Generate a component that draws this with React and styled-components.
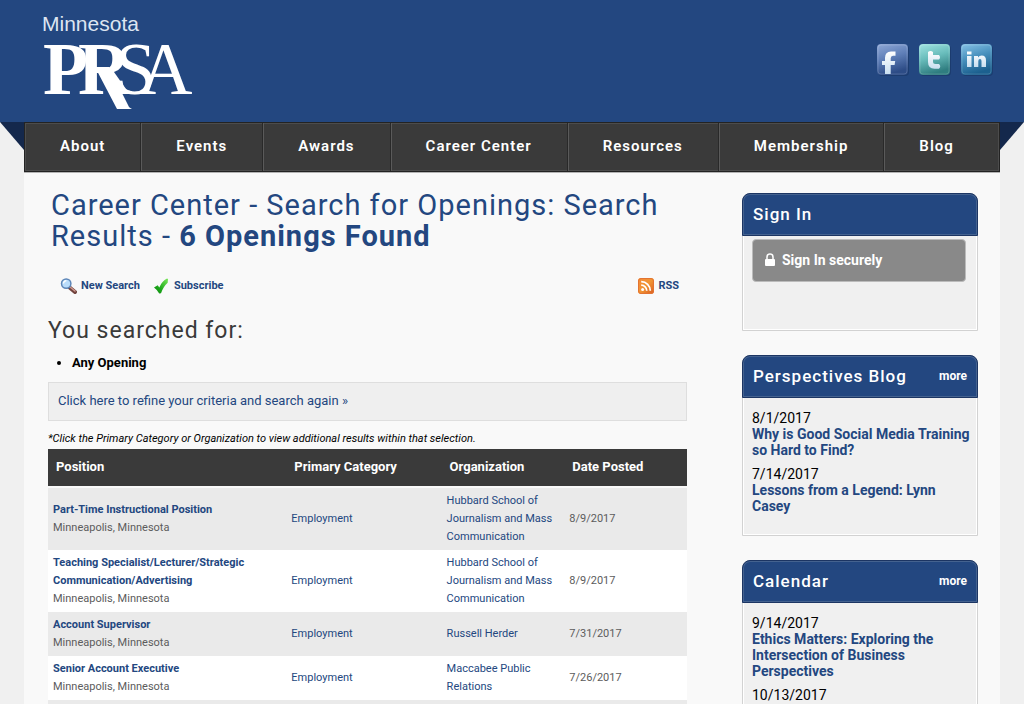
import React from "react";
import styled, { createGlobalStyle } from "styled-components";

const blue = "#234780";

const GlobalStyle = createGlobalStyle`
  * { box-sizing: border-box; }
  body {
    margin: 0;
    background: #f0f0f0;
    color: #000;
    font-family: Roboto, "Liberation Sans", sans-serif;
    font-size: 13px;
  }
  a { color: ${blue}; text-decoration: none; }
  h1, h2, p, ul { margin: 0; padding: 0; }
`;

const Header = styled.header`
  display: flex;
  justify-content: space-between;
  align-items: flex-start;
  height: 122px;
  padding: 12px 31px 0 42px;
  background: ${blue};
`;

const LogoLink = styled.a`
  display: block;
  svg { display: block; }
`;

const Social = styled.div`
  display: flex;
  gap: 10px;
  padding-top: 32px;
  svg { display: block; }
`;

const NavRow = styled.div`
  display: flex;
  align-items: flex-start;
`;

const Fold = styled.div`
  flex: none;
  width: 24px;
  height: 28px;
  background: #14284c;
  clip-path: ${(p) => (p.$right ? "polygon(0 0, 100% 0, 0 100%)" : "polygon(0 0, 100% 0, 100% 100%)")};
`;

const Nav = styled.nav`
  flex: 1;
  display: flex;
  height: 50px;
  border: 1px solid #232323;
  background: #3a3a3a;
  box-shadow: inset 0 1px #4c4c4c, inset 0 -1px #4c4c4c, 0 1px #b4b4b4;
`;

const NavLink = styled.a`
  display: flex;
  align-items: center;
  padding: 0 35px 2px 34px;
  border-left: 1px solid #5a5a5a;
  border-right: 1px solid #292929;
  color: #fff;
  font-size: 15px;
  font-weight: 600;
  letter-spacing: 1px;
  white-space: nowrap;
  &:first-child { border-left-color: #4c4c4c; }
  &:last-child {
    flex: 1;
    border-right-color: #4c4c4c;
  }
`;

const Content = styled.div`
  display: grid;
  grid-template-columns: minmax(0, 1fr) 236px;
  column-gap: 55px;
  margin: 0 24px;
  padding: 0 22px 0 24px;
  background: #f9f9f9;
`;

const Main = styled.main`
  padding-top: 18px;
`;

const Title = styled.h1`
  padding: 0 3px;
  color: ${blue};
  font-size: 29px;
  line-height: 31px;
  font-weight: 400;
  letter-spacing: 1px;
`;

const Toolbar = styled.div`
  display: flex;
  gap: 14px;
  margin-top: 26px;
  padding: 0 8px 0 12px;
`;

const Tool = styled.a`
  display: flex;
  align-items: center;
  gap: 4px;
  margin-left: ${(p) => (p.$end ? "auto" : "0")};
  font-size: 11px;
  line-height: 16px;
  font-weight: 700;
`;

const Subtitle = styled.h2`
  margin-top: 23px;
  color: #3a3a3a;
  font-size: 23px;
  line-height: 28px;
  font-weight: 400;
  letter-spacing: 1px;
`;

const Criteria = styled.ul`
  margin-top: 9px;
  padding-left: 24px;
  font-weight: 700;
  line-height: 18px;
`;

const Refine = styled.a`
  display: block;
  margin-top: 10px;
  padding: 0 9px 2px;
  border: 1px solid #dedede;
  background: #efefef;
  font-size: 13px;
  line-height: 35px;
`;

const Note = styled.p`
  margin-top: 10px;
  font-size: 11px;
  line-height: 16px;
  font-style: italic;
`;

const Table = styled.table`
  width: 100%;
  margin-top: 2px;
  border-collapse: collapse;
  table-layout: fixed;
  font-size: 11px;
  line-height: 18px;
`;

const Col = styled.col`
  width: ${(p) => p.$width};
`;

const HeadCell = styled.th`
  height: 38px;
  padding: 0 8px 2px;
  border-bottom: 2px solid #f9f9f9;
  background: #3a3a3a;
  color: #fff;
  font-size: 13px;
  font-weight: 700;
  text-align: left;
`;

const Row = styled.tr`
  background: #fff;
  &:nth-child(odd) { background: #eaeaea; }
`;

const Cell = styled.td`
  height: 44px;
  padding: 4px 5px;
  color: #5c5c5c;
`;

const JobLink = styled.a`
  display: block;
  font-weight: 700;
`;

const Sidebar = styled.aside`
  display: flex;
  flex-direction: column;
  gap: 24px;
  padding: 21px 0 24px;
`;

const Panel = styled.section`
  min-height: ${(p) => p.$height};
  border: 1px solid #d2d2d2;
  border-radius: 8px 8px 0 0;
  background: #f0f0f0;
  box-shadow: inset 0 0 0 1px #fff;
`;

const PanelHead = styled.div`
  display: flex;
  align-items: center;
  justify-content: space-between;
  height: 43px;
  margin: -1px -1px 0;
  padding: 0 10px 2px;
  border: 1px solid #1c3563;
  border-radius: 8px 8px 0 0;
  background: ${blue};
  box-shadow: inset 0 0 0 1px #44628f;
`;

const PanelTitle = styled.h2`
  color: #fff;
  font-size: 17px;
  font-weight: 500;
  letter-spacing: 1px;
`;

const More = styled.a`
  color: #fff;
  font-size: 12px;
  font-weight: 700;
`;

const SignIn = styled.button`
  display: flex;
  align-items: center;
  gap: 7px;
  width: calc(100% - 20px);
  height: 43px;
  margin: 3px 11px 0 9px;
  padding: 0 12px 2px;
  border: 1px solid #bbb;
  border-radius: 4px;
  background: #898989;
  color: #fff;
  font-family: inherit;
  font-size: 14px;
  font-weight: 700;
`;

const Items = styled.div`
  display: flex;
  flex-direction: column;
  gap: 8px;
  padding: 12px 5px 12px 9px;
  font-size: 14px;
  line-height: 16px;
  a { display: block; font-weight: 700; }
`;

function Logo() {
  return (
    <svg width="152" height="104" viewBox="42 12 152 104" role="img" aria-label="Minnesota PRSA">
      <text x="42" y="31" fontFamily="Liberation Sans" fontSize="21" fill="#dde5f1">Minnesota</text>
      <text y="94" fill="#fff" fontFamily="Liberation Serif" fontSize="74">
        <tspan x="43" fontWeight="700">P</tspan>
        <tspan x="78" fontWeight="700">R</tspan>
        <tspan x="115">S</tspan>
        <tspan x="139">A</tspan>
      </text>
      <path d="M95 67h14l20 40q1 1 3 2h-15z" fill="#fff" />
    </svg>
  );
}

function Badge({ id, top, mid, bottom, label, children }) {
  return (
    <a href="#social" aria-label={label}>
      <svg width="32" height="33" viewBox="0 0 32 33">
        <defs>
          <linearGradient id={id} x1="0" y1="0" x2=".3" y2="1">
            <stop offset="0" stopColor={top} />
            <stop offset=".5" stopColor={mid} />
            <stop offset="1" stopColor={bottom} />
          </linearGradient>
          <linearGradient id={id + "g"} x1="0" y1="0" x2="0" y2="1">
            <stop offset="0" stopColor="#fff" />
            <stop offset="1" stopColor="#c9dff0" />
          </linearGradient>
        </defs>
        <rect x="1" y="1" width="31" height="31" rx="4" fill="#152f5c" opacity=".45" />
        <rect x="0" y="0" width="31" height="31" rx="4" fill={`url(#${id})`} />
        <rect x="1" y="1" width="29" height="29" rx="3" fill="none" stroke="#fff" opacity=".15" />
        <g fill={`url(#${id}g)`}>{children}</g>
      </svg>
    </a>
  );
}

function SearchIcon() {
  return (
    <svg width="17" height="16" viewBox="0 0 17 16">
      <path d="M9 9l6 5" stroke="#71433e" strokeWidth="4" strokeLinecap="round" />
      <path d="M10 9l5 4" stroke="#cf9a90" strokeWidth="1.5" strokeLinecap="round" />
      <circle cx="6.2" cy="5.6" r="4.7" fill="#b9dcfa" stroke="#5d86b8" strokeWidth="1.5" />
      <path d="M3.4 5.5q.4-2.6 3-2.8" stroke="#fff" strokeWidth="1.3" fill="none" />
    </svg>
  );
}

function CheckIcon() {
  return (
    <svg width="16" height="16" viewBox="0 0 16 16">
      <defs>
        <linearGradient id="check" x1="1" y1="0" x2="0" y2="1">
          <stop offset="0" stopColor="#7be85a" />
          <stop offset=".6" stopColor="#1faa1c" />
          <stop offset="1" stopColor="#0a840e" />
        </linearGradient>
      </defs>
      <path d="M0 9.500L3.700 7.300l1.600 2.200Q8 3 13 .6l1 .3-.3 3.800Q9.300 8.500 7 15.300L5.200 15.500Q3.300 11.800 0 9.500z" fill="url(#check)" />
    </svg>
  );
}

function RssIcon() {
  return (
    <svg width="16" height="16" viewBox="0 0 16 16">
      <defs>
        <linearGradient id="rss" x1="0" y1="0" x2="1" y2="1">
          <stop offset="0" stopColor="#f58a38" />
          <stop offset=".5" stopColor="#f19535" />
          <stop offset="1" stopColor="#d95a20" />
        </linearGradient>
      </defs>
      <rect width="16" height="16" rx="3" fill="url(#rss)" />
      <rect x=".5" y=".5" width="15" height="15" rx="2.500" fill="none" stroke="#e37431" />
      <circle cx="4.600" cy="11.500" r="1.500" fill="#fff" />
      <path d="M3.200 7.200a5.600 5.600 0 0 1 5.600 5.600M3.200 3.700a9.100 9.100 0 0 1 9.100 9.100" fill="none" stroke="#fff" strokeWidth="1.700" />
    </svg>
  );
}

function LockIcon() {
  return (
    <svg width="10" height="14" viewBox="0 0 10 14">
      <path d="M2 6V4a3 3 0 0 1 6 0v2" fill="none" stroke="#fff" strokeWidth="1.500" />
      <rect x="0" y="6" width="10" height="7" rx="1" fill="#fff" />
    </svg>
  );
}

const menu = ["About", "Events", "Awards", "Career Center", "Resources", "Membership", "Blog"];

const jobs = [
  ["Part-Time Instructional Position", "Hubbard School of Journalism and Mass Communication", "8/9/2017"],
  ["Teaching Specialist/Lecturer/Strategic Communication/Advertising", "Hubbard School of Journalism and Mass Communication", "8/9/2017"],
  ["Account Supervisor", "Russell Herder", "7/31/2017"],
  ["Senior Account Executive", "Maccabee Public Relations", "7/26/2017"],
];

const posts = [
  ["8/1/2017", "Why is Good Social Media Training so Hard to Find?"],
  ["7/14/2017", "Lessons from a Legend: Lynn Casey"],
];

const events = [
  ["9/14/2017", "Ethics Matters: Exploring the Intersection of Business Perspectives"],
  ["10/13/2017", ""],
];

function ItemList({ items }) {
  return (
    <Items>
      {items.map(([date, title]) => (
        <div key={date}>
          {date}
          {title && <a href="#item">{title}</a>}
        </div>
      ))}
    </Items>
  );
}

export default function App() {
  return (
    <>
      <GlobalStyle />
      <Header>
        <LogoLink href="#home"><Logo /></LogoLink>
        <Social>
          <Badge id="fb" label="Facebook" top="#8fa8d6" mid="#5f7fb8" bottom="#2d4c86">
            <path d="M8 30V21H5v-4h3v-3q0-6.500 6-6.500h4.500v4.300H16q-2.300 0-2.300 2.500V17h4.500l-.6 4h-3.900v9z" />
          </Badge>
          <Badge id="tw" label="Twitter" top="#a0e4e2" mid="#68bcbb" bottom="#2f7d80">
            <path d="M9 8q2.500-2 5 0v3h6q2 2.300 0 4.500h-6v2q0 2.500 2.500 2.500H20q2.500 2.300 0 4.700h-4.500Q9 24.700 9 18z" />
          </Badge>
          <Badge id="li" label="LinkedIn" top="#86c2e6" mid="#4790bd" bottom="#1c608f">
            <path d="M6 12h4.500v11H6zM6 7.500h4.500v3H6zM13 12h4v1.500q1.300-1.900 3.700-1.900 4.300 0 4.300 5V23h-4.500v-6q0-2-1.500-2-1.700 0-1.700 2v6H13z" />
          </Badge>
        </Social>
      </Header>
      <NavRow>
        <Fold />
        <Nav>
          {menu.map((name) => <NavLink key={name} href="#menu">{name}</NavLink>)}
        </Nav>
        <Fold $right />
      </NavRow>
      <Content>
        <Main>
          <Title>Career Center - Search for Openings: Search Results - <b>6 Openings Found</b></Title>
          <Toolbar>
            <Tool href="#search"><SearchIcon />New Search</Tool>
            <Tool href="#subscribe"><CheckIcon />Subscribe</Tool>
            <Tool href="#rss" $end><RssIcon />RSS</Tool>
          </Toolbar>
          <Subtitle>You searched for:</Subtitle>
          <Criteria><li>Any Opening</li></Criteria>
          <Refine href="#refine">Click here to refine your criteria and search again »</Refine>
          <Note>*Click the Primary Category or Organization to view additional results within that selection.</Note>
          <Table>
            <colgroup>
              <Col $width="37.3%" />
              <Col $width="24.3%" />
              <Col $width="19.2%" />
              <Col $width="19.2%" />
            </colgroup>
            <thead>
              <tr>
                <HeadCell>Position</HeadCell>
                <HeadCell>Primary Category</HeadCell>
                <HeadCell>Organization</HeadCell>
                <HeadCell>Date Posted</HeadCell>
              </tr>
            </thead>
            <tbody>
              {jobs.map(([title, org, date]) => (
                <Row key={title}>
                  <Cell><JobLink href="#job">{title}</JobLink>Minneapolis, Minnesota</Cell>
                  <Cell><a href="#category">Employment</a></Cell>
                  <Cell><a href="#organization">{org}</a></Cell>
                  <Cell>{date}</Cell>
                </Row>
              ))}
              <Row><Cell colSpan={4} /></Row>
            </tbody>
          </Table>
        </Main>
        <Sidebar>
          <Panel $height="138px">
            <PanelHead><PanelTitle>Sign In</PanelTitle></PanelHead>
            <SignIn type="button"><LockIcon />Sign In securely</SignIn>
          </Panel>
          <Panel $height="181px">
            <PanelHead><PanelTitle>Perspectives Blog</PanelTitle><More href="#blog">more</More></PanelHead>
            <ItemList items={posts} />
          </Panel>
          <Panel $height="181px">
            <PanelHead><PanelTitle>Calendar</PanelTitle><More href="#calendar">more</More></PanelHead>
            <ItemList items={events} />
          </Panel>
        </Sidebar>
      </Content>
    </>
  );
}
